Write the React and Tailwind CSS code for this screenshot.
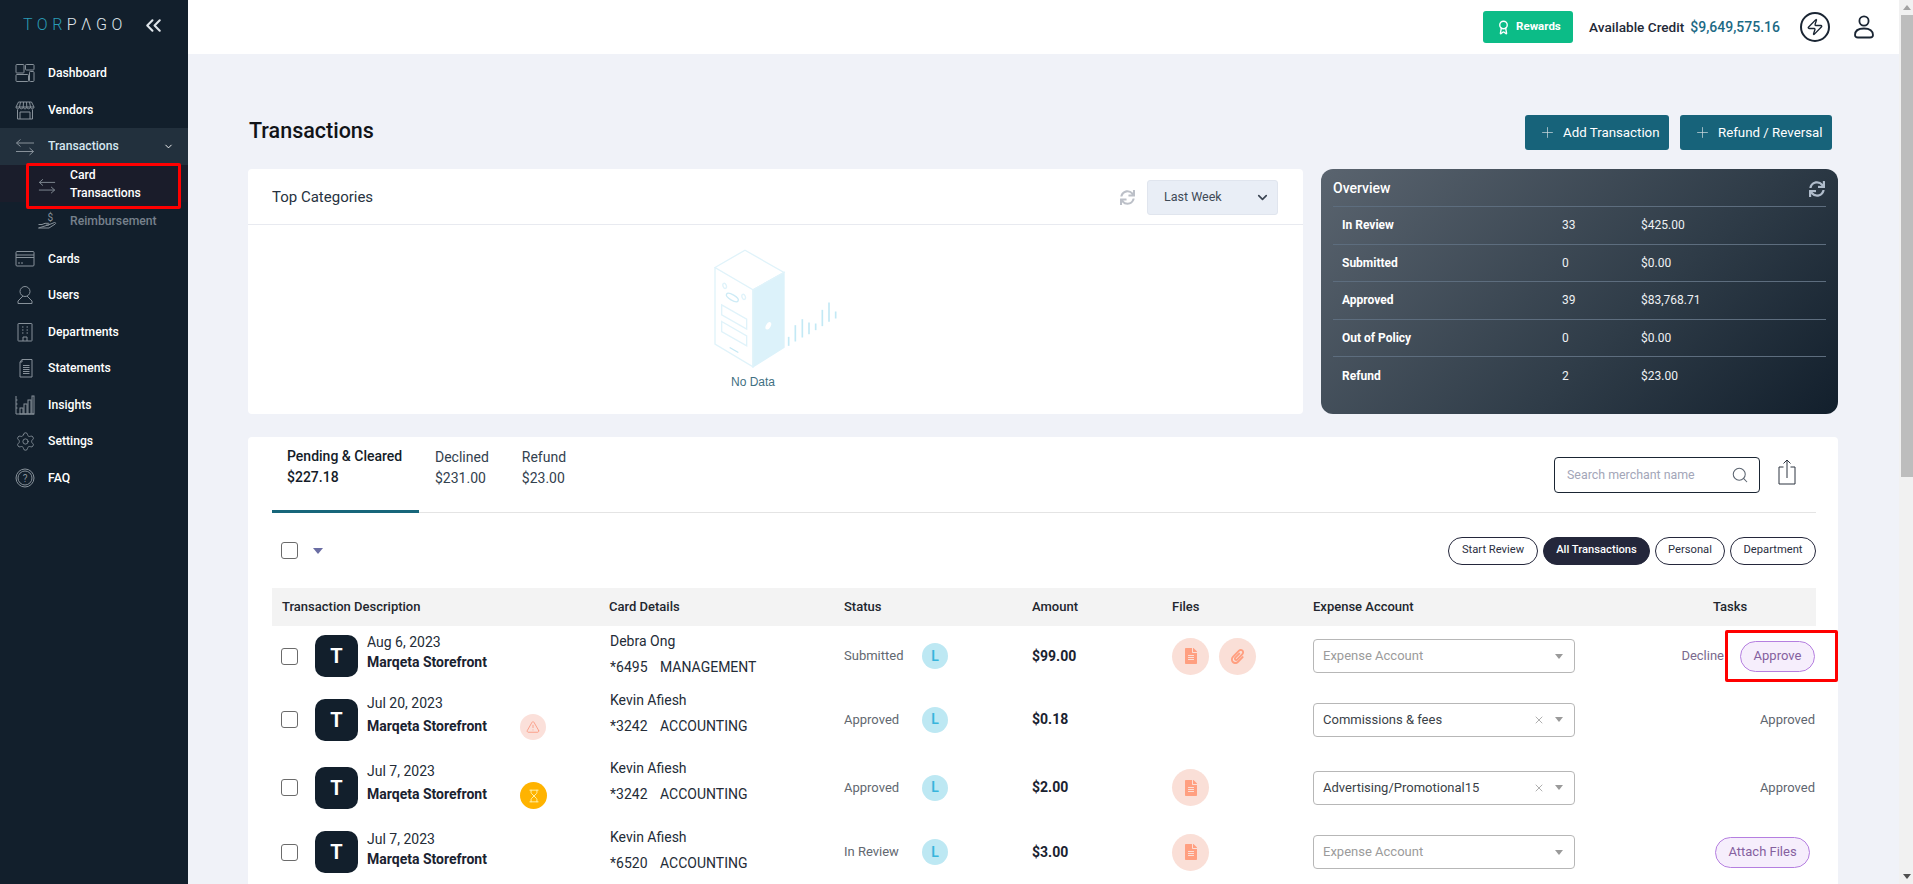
import React from "react";
import { Award, ChevronDown, ChevronsLeft, Plus, Search, Settings, TriangleAlert, Hourglass, Zap, X } from "lucide-react";
import { FaSync, FaFileAlt, FaPaperclip } from "react-icons/fa";

const S = ({ children, vb = "0 0 20 20", w = 20, h = 20 }) => (
  <svg width={w} height={h} viewBox={vb} fill="none" stroke="#87919a" strokeWidth="1">{children}</svg>
);

const IDash = () => (
  <S>
    <rect x="1" y="1.5" width="8" height="8.5" rx="0.8" /><rect x="10.5" y="1.5" width="8.5" height="5.5" rx="0.8" />
    <rect x="1" y="11.5" width="12.5" height="7" rx="0.8" /><rect x="14.5" y="8.5" width="4.5" height="10" rx="0.8" />
  </S>
);
const IVendor = () => (
  <S>
    <path d="M3.5 2h13l2.5 5H1z" /><path d="M1 7c0 2.4 3.6 2.4 3.6 0 0 2.4 3.6 2.4 3.6 0 0 2.4 3.6 2.4 3.6 0 0 2.4 3.6 2.4 3.6 0 0 2.4 3.6 2.4 3.6 0" />
    <path d="M5.5 2L4.5 7M8.5 2L8.2 7M11.5 2l.3 5M14.5 2l1 5" /><path d="M2.5 9.5V19h15V9.5M5 12h10v7M5 12v7" />
  </S>
);
const ITrans = ({ w = 20 }) => (
  <S w={w}>
    <path d="M19 6H1.5M5.5 2.5 1.5 6l4 3.5" /><path d="M1 14.5h17.5M14.5 11l4 3.5-4 3.5" />
  </S>
);
const IReimb = () => (
  <S>
    <path d="M1.5 13.5h3.5l3 -1.2h3.5c1 0 1 1.8 0 1.8H9M12 13.7l5.5 -2.2c1.2 -.3 1.6 1 .6 1.6L12 17H1.5z" />
    <text x="10.5" y="9.5" fontSize="10" fill="#87919a" stroke="none" fontFamily="Roboto">$</text>
  </S>
);
const ICard = () => (
  <S>
    <rect x="1" y="2.5" width="18" height="14.5" rx="1" /><path d="M1 6h18M1 8.5h18M3 14h2M6 14h2" />
  </S>
);
const IUser = () => (
  <S>
    <circle cx="10" cy="6.5" r="5" /><path d="M8 11 3 16v2.5h14V16l-5-5" />
  </S>
);
const IDept = () => (
  <S>
    <rect x="3" y="1.5" width="14" height="17.5" rx="0.5" /><path d="M7 5h1.5M11.5 5H13M7 8h1.5M11.5 8H13M7 11h1.5M11.5 11H13" /><path d="M8 19v-4h4v4" />
  </S>
);
const IState = () => (
  <S>
    <path d="M7 1.5h10V19H5V4z" /><path d="M7 1.5V4H5" /><path d="M8 7.5h6.5M8 9.5h6.5M8 11.5h6.5M8 13.5h6.5M8 15.5h6.5" />
  </S>
);
const IInsight = () => (
  <S>
    <path d="M1 1v18h18M1 5h1.5M1 9h1.5M1 13h1.5" /><rect x="5" y="13" width="3" height="6" /><rect x="9" y="9" width="3" height="10" /><rect x="13" y="5" width="3" height="14" /><rect x="17" y="1" width="2" height="18" />
  </S>
);
const IFaq = () => (
  <S>
    <circle cx="10" cy="10" r="9" /><circle cx="10" cy="10" r="7" />
    <text x="10" y="13.5" fontSize="10" textAnchor="middle" fill="#87919a" stroke="none" fontFamily="Roboto">?</text>
  </S>
);
const IGear = () => <Settings size={21} strokeWidth={1} color="#87919a" />;

const Item = ({ icon, label, h = "h-[36.7px]" }) => (
  <div className={`flex items-center ${h}`}>
    <div className="ml-[15px] w-[33px] flex items-center">{icon}</div>
    <span className="text-[12.2px] font-medium text-white">{label}</span>
  </div>
);

function Sidebar() {
  return (
    <aside className="w-[188px] shrink-0 bg-[#121f2c] h-full">
      <div className="h-[55px] flex items-start pt-[15px] pl-[23px]">
        <span className="text-[16px] font-light tracking-[0.28em] leading-[19px] w-[118px] whitespace-nowrap">
          <span className="text-[#2a9bb6]">TOR</span><span className="text-[#dfe5ea]">PΛGO</span>
        </span>
        <ChevronsLeft size={25} strokeWidth={2} color="#dfe5ea" className="-mt-[2px]" />
      </div>
      <Item icon={<IDash />} label="Dashboard" />
      <Item icon={<IVendor />} label="Vendors" />
      <div className="flex items-center h-[37px] bg-[#22303d]">
        <div className="ml-[15px] w-[33px] flex items-center"><ITrans /></div>
        <span className="text-[12.2px] font-medium text-[#d5e6ef] -mt-[1px]">Transactions</span>
        <ChevronDown size={11} color="#fff" className="ml-[44px]" />
      </div>
      <div className="relative h-[37px] bg-[#1a1d2b]">
        <div className="absolute left-[26px] top-[-2px] w-[155px] h-[46px] border-[3px] border-[#ff0000] rounded-[2px] bg-[#1a1c2a] flex items-center">
          <div className="ml-[9px] w-[32px] flex items-center"><ITrans w={18} /></div>
          <span className="text-[12.2px] font-medium text-white leading-[18px] w-[80px] -mt-[5px]">Card Transactions</span>
        </div>
      </div>
      <div className="flex items-center h-[38px]">
        <div className="ml-[37px] w-[33px] flex items-center"><IReimb /></div>
        <span className="text-[12.2px] font-medium text-[#77818c]">Reimbursement</span>
      </div>
      <Item h="h-[36.6px]" icon={<ICard />} label="Cards" />
      <Item h="h-[36.6px]" icon={<IUser />} label="Users" />
      <Item h="h-[36.6px]" icon={<IDept />} label="Departments" />
      <Item h="h-[36.6px]" icon={<IState />} label="Statements" />
      <Item h="h-[36.6px]" icon={<IInsight />} label="Insights" />
      <Item h="h-[36.6px]" icon={<IGear />} label="Settings" />
      <Item h="h-[36.6px]" icon={<IFaq />} label="FAQ" />
    </aside>
  );
}

function Header() {
  return (
    <header className="h-[54px] bg-white flex items-center shrink-0 pr-[25px] justify-end">
      <button className="w-[90px] h-[32px] rounded-[3px] bg-[#0cbc87] flex items-center pl-[13px] text-white text-[11.5px] font-bold">
        <Award size={15} strokeWidth={2.2} className="mr-[5px]" />Rewards
      </button>
      <span className="ml-[16px] text-[13.6px] font-medium text-[#1f2937]">Available Credit</span>
      <span className="ml-[6px] text-[14px] font-medium text-[#1c6a85]">$9,649,575.16</span>
      <div className="ml-[20px] w-[30px] h-[30px] rounded-full border-2 border-[#1a2533] flex items-center justify-center">
        <Zap size={18} strokeWidth={1.8} color="#1a2533" />
      </div>
      <svg className="ml-[24px]" width="20" height="24" viewBox="0 0 20 24" fill="none" stroke="#1a2533" strokeWidth="1.8">
        <circle cx="10" cy="6" r="4.6" />
        <path d="M1 20c0-4 3-6.5 9-6.5S19 16 19 20c0 1.5-1 2.5-3 2.5H4c-2 0-3-1-3-2.5z" />
      </svg>
    </header>
  );
}

const ActionBtn = ({ w, label }) => (
  <button className={`${w} h-[35px] rounded-[3px] bg-[#17637a] flex items-center pl-[14px] text-white text-[13.3px]`}>
    <Plus size={17} strokeWidth={1} color="#d0dbe0" className="mr-[7px]" />{label}
  </button>
);

function NoDataArt() {
  const bars = [[384, 288, 315], [404, 253, 302], [425, 235, 290], [445, 245, 280], [465, 248, 268], [485, 207, 256], [505, 185, 243], [525, 212, 233]];
  return (
    <svg width="124" height="119" viewBox="160 25 372 356" fill="none" stroke="#e0f3fa" strokeWidth="4">
      <path d="M277 147 370 95V320L277 378Z" fill="#dcf2fa" stroke="#dcf2fa" />
      <path d="M163 80 253 28 370 95 277 147ZM163 80V310L277 378V147" />
      <ellipse cx="215" cy="170" rx="20" ry="8" transform="rotate(30 215 170)" stroke="#cdebf6" />
      <ellipse cx="192" cy="135" rx="5" ry="8" transform="rotate(-20 192 135)" />
      <ellipse cx="249" cy="168" rx="5" ry="8" transform="rotate(-20 249 168)" />
      <path d="M183 192 258 235V265L183 222ZM183 242 258 285V315L183 272Z" />
      <path d="M207 320 233 335" stroke="#c5e8f4" />
      <ellipse cx="323" cy="255" rx="7" ry="12" transform="rotate(30 323 255)" fill="#fff" stroke="none" />
      {bars.map(([x, a, b]) => <path key={x} d={`M${x} ${a}V${b}`} stroke="#c3e9f5" strokeWidth="5" />)}
    </svg>
  );
}

const overview = [["In Review", "33", "$425.00"], ["Submitted", "0", "$0.00"], ["Approved", "39", "$83,768.71"], ["Out of Policy", "0", "$0.00"], ["Refund", "2", "$23.00"]];

function TopCards() {
  return (
    <div className="flex gap-[18px] mt-[19px]">
      <section className="w-[1055px] h-[245px] bg-white rounded-[4px]">
        <div className="h-[56px] pt-[2px] border-b border-[#e8eaf0] flex items-center pl-[24px] pr-[25px]">
          <span className="text-[15px] text-[#273240]">Top Categories</span>
          <FaSync size={15} color="#bcc0c8" className="ml-auto mr-[12px]" />
          <div className="w-[131px] h-[35px] rounded-[3px] bg-[#e9eef6] border border-[#e0e5ee] flex items-center pl-[16px] pr-[7px] text-[12.5px] text-[#3f4a57]">
            Last Week<ChevronDown size={15} strokeWidth={2.6} color="#3a4452" className="ml-auto" />
          </div>
        </div>
        <div className="flex flex-col items-center pt-[24px]">
          <NoDataArt />
          <span className="mr-[45px] mt-[6px] text-[12px] leading-[16px] text-[#3f7082] font-['Liberation_Sans',sans-serif]">No Data</span>
        </div>
      </section>
      <section className="w-[517px] h-[245px] rounded-[12px] bg-[linear-gradient(135deg,#5a646f,#2f3c48_60%,#121f2c)] px-[12px] text-white">
        <div className="h-[38px] pt-[2px] border-b border-[#5d6d7e] flex items-center justify-between">
          <span className="text-[14px] font-medium">Overview</span>
          <FaSync size={16} color="#b0bccb" className="mr-[1px]" />
        </div>
        {overview.map(([a, b, c], i) => (
          <div key={a} className={`flex items-center h-[37.5px] text-[12px] ${i < 4 ? "border-b border-[#5d6d7e]" : ""}`}>
            <span className="w-[229px] pl-[9px] font-bold">{a}</span>
            <span className="w-[79px] text-[#eef1f4]">{b}</span>
            <span className="text-[#eef1f4]">{c}</span>
          </div>
        ))}
      </section>
    </div>
  );
}

const Check = () => <div className="w-[17px] h-[17px] rounded-[3px] border border-[#6b6b6b] bg-white" />;

const Pill = ({ w, label, active }) => (
  <div className={`${w} h-[28px] rounded-full border border-[#24273b] flex items-center justify-center text-[11.2px] ${active ? "bg-[#24273b] text-white font-medium" : "text-[#2b2f3f]"}`}>{label}</div>
);

const FileCircle = ({ children }) => (
  <div className="w-[37px] h-[37px] rounded-full bg-[#fadfd7] flex items-center justify-center">{children}</div>
);
const FileIcon = () => <FileCircle><FaFileAlt size={16} color="#ff9f80" /></FileCircle>;

const Purple = ({ w, label }) => (
  <button className={`${w} h-[31px] rounded-full bg-[#f6eefc] border border-[#b57fe0] text-[#85609f] text-[13px]`}>{label}</button>
);

const Caret = () => <span className="w-0 h-0 border-x-[4px] border-x-transparent border-t-[5px] border-t-[#9a9a9a] ml-[10px]" />;

function ExpenseSelect({ value }) {
  return (
    <div className="w-[262px] h-[34px] rounded-[4px] border border-[#b7b7b7] flex items-center pl-[9px] pr-[11px] text-[13px]">
      <span className={value ? "text-[#3a3f47]" : "text-[#9b9b9b]"}>{value || "Expense Account"}</span>
      <span className="ml-auto flex items-center">
        {value && <X size={12} strokeWidth={1.4} color="#8c8c8c" />}
        <Caret />
      </span>
    </div>
  );
}

const rows = [
  { h: "h-[60px]", date: "Aug 6, 2023", dc: "mt-[7px] gap-[2px]", who: "Debra Ong", card: "*6495", dept: "MANAGEMENT", wc: "mt-[6px]", status: "Submitted", amt: "$99.00", files: 2, tasks: "approve" },
  { h: "h-[67px]", date: "Jul 20, 2023", dc: "mt-[8px] gap-[5px]", who: "Kevin Afiesh", card: "*3242", dept: "ACCOUNTING", wc: "mt-[5px]", status: "Approved", amt: "$0.18", files: 0, badge: "warn", value: "Commissions & fees", tasks: "approved" },
  { h: "h-[69px]", date: "Jul 7, 2023", dc: "mt-[9px] gap-[5px]", who: "Kevin Afiesh", card: "*3242", dept: "ACCOUNTING", wc: "mt-[6px]", status: "Approved", amt: "$2.00", files: 1, badge: "wait", value: "Advertising/Promotional15", tasks: "approved" },
  { h: "h-[60px]", date: "Jul 7, 2023", dc: "mt-[8px] gap-[2px]", who: "Kevin Afiesh", card: "*6520", dept: "ACCOUNTING", wc: "mt-[6px]", status: "In Review", amt: "$3.00", files: 1, tasks: "attach" },
];

const rowGrid = "grid grid-cols-[43px_52px_153px_90px_234px_188px_140px_141px_262px_240px]";

function Row({ r }) {
  return (
    <div className={`relative ${rowGrid} ${r.h} items-center`}>
      <div className="pl-[9px] flex"><Check /></div>
      <div className="w-[43px] h-[42px] rounded-[10px] bg-[#121f2c] flex items-center justify-center text-white text-[20px] font-bold">T</div>
      <div className={`self-start flex flex-col leading-[18px] ${r.dc}`}>
        <span className="text-[14px] text-[#242c37]">{r.date}</span>
        <span className="text-[14px] font-bold text-[#1a2230]">Marqeta Storefront</span>
      </div>
      <div className={`self-start ${r.badge === "warn" ? "mt-[28px]" : "mt-[29px]"}`}>
        {r.badge === "warn" && <div className="w-[26px] h-[26px] rounded-full bg-[#fbe0da] flex items-center justify-center"><TriangleAlert size={14} strokeWidth={1.3} color="#fb8c72" /></div>}
        {r.badge === "wait" && <div className="w-[27px] h-[27px] rounded-full bg-[#ffb300] flex items-center justify-center"><Hourglass size={14} strokeWidth={1.6} color="#fff3b0" /></div>}
      </div>
      <div className={`self-start flex flex-col gap-[8px] leading-[18px] text-[14px] text-[#242c37] ${r.wc}`}>
        <span>{r.who}</span>
        <span className="flex"><span className="w-[50px]">{r.card}</span><span>{r.dept}</span></span>
      </div>
      <div className="flex items-center">
        <span className="w-[78px] text-[13px] text-[#626870]">{r.status}</span>
        <div className="w-[26px] h-[26px] rounded-full bg-[#bde8f3] flex items-center justify-center text-[14px] font-semibold text-[#38b5dc]">L</div>
      </div>
      <span className="text-[14px] font-bold text-[#1a2230]">{r.amt}</span>
      <div className="flex gap-[10px]">
        {r.files > 0 && <FileIcon />}
        {r.files > 1 && <FileCircle><FaPaperclip size={15} color="#ff9f80" /></FileCircle>}
      </div>
      <ExpenseSelect value={r.value} />
      <div className="flex items-center justify-end text-[13px]">
        {r.tasks === "approve" && <>
          <span className="text-[#7a6a8e] mr-[16px]">Decline</span><Purple w="w-[75px]" label="Approve" />
        </>}
        {r.tasks === "approved" && <span className="text-[#5f6670]">Approved</span>}
        {r.tasks === "attach" && <div className="mr-[5px]"><Purple w="w-[95px]" label="Attach Files" /></div>}
      </div>
      {r.tasks === "approve" && <div className="absolute left-[1453px] top-[4px] w-[113px] h-[52px] border-[3px] border-[#ff0000] rounded-[2px]" />}
    </div>
  );
}

function ShareIcon() {
  return (
    <svg width="18" height="26" viewBox="0 0 18 26" fill="none" stroke="#2c3440" strokeWidth="1">
      <path d="M5.5 8H1v17h16V8h-4.5" /><path d="M9 19V1M5.5 4.5 9 1l3.5 3.5" />
    </svg>
  );
}

function TxCard() {
  return (
    <section className="mt-[23px] h-[470px] bg-white rounded-[4px] pl-[24px] pr-[22px]">
      <div className="h-[76px] border-b border-[#e4e4e4] flex items-start">
        <div className="w-[147px] h-[76px] border-b-[3px] border-[#17667a] pl-[15px] pt-[9px] text-[14px] font-medium leading-[21px] text-[#141c28]">
          <div>Pending &amp; Cleared</div><div>$227.18</div>
        </div>
        <div className="ml-[16px] pt-[10px] text-[14px] leading-[21px] text-[#33414e]">
          <div>Declined</div><div>$231.00</div>
        </div>
        <div className="ml-[33px] pt-[10px] text-[14px] leading-[21px] text-[#33414e]">
          <div>Refund</div><div>$23.00</div>
        </div>
        <div className="ml-auto mt-[20px] w-[206px] h-[36px] rounded-[4px] border border-[#1a2533] flex items-center pl-[12px] pr-[10px] text-[12.4px] text-[#a3a6b8]">
          Search merchant name<Search size={18} strokeWidth={1.4} color="#5b6470" className="ml-auto" />
        </div>
        <div className="ml-[18px] mr-[20px] mt-[22px]"><ShareIcon /></div>
      </div>
      <div className="h-[75px] flex items-center">
        <div className="pl-[9px] flex"><Check /></div>
        <span className="ml-[15px] w-0 h-0 border-x-[5px] border-x-transparent border-t-[6px] border-t-[#6a6da3]" />
        <div className="ml-auto flex gap-[5px]">
          <Pill w="w-[90px]" label="Start Review" />
          <Pill w="w-[107px]" label="All Transactions" active />
          <Pill w="w-[70px]" label="Personal" />
          <Pill w="w-[86px]" label="Department" />
        </div>
      </div>
      <div className="grid grid-cols-[337px_235px_188px_140px_141px_400px_102px] h-[38px] items-center bg-[#f3f3f3] text-[13px] font-medium text-[#22262e]">
        <span className="pl-[10px]">Transaction Description</span>
        <span>Card Details</span>
        <span>Status</span>
        <span>Amount</span>
        <span>Files</span>
        <span>Expense Account</span>
        <span>Tasks</span>
      </div>
      {rows.map((r, i) => <Row key={i} r={r} />)}
    </section>
  );
}

function ScrollBar() {
  return (
    <div className="w-[14px] shrink-0 h-full bg-[#f1f1f1] flex flex-col items-end">
      <div className="w-[12px] h-[15px] flex items-center justify-center">
        <span className="w-0 h-0 border-x-[4px] border-x-transparent border-b-[5px] border-b-[#a3a3a3]" />
      </div>
      <div className="w-[12px] h-[462px] bg-[#bdbdbd]" />
      <div className="w-[12px] mt-auto h-[15px] flex items-center justify-center">
        <span className="w-0 h-0 border-x-[4px] border-x-transparent border-t-[5px] border-t-[#505050]" />
      </div>
    </div>
  );
}

export default function App() {
  return (
    <div className="w-[1913px] h-[884px] flex overflow-hidden bg-[#f0f2f8] font-['Roboto',sans-serif]">
      <Sidebar />
      <div className="flex-1 min-w-0 flex flex-col">
        <Header />
        <main className="pl-[60px] pr-[61px]">
          <div className="mt-[61px] h-[35px] flex items-center pr-[6px]">
            <h1 className="text-[21.5px] font-medium text-[#111418] pl-[1px] -mt-[3px]">Transactions</h1>
            <div className="ml-auto flex gap-[11px]">
              <ActionBtn w="w-[144px]" label="Add Transaction" />
              <ActionBtn w="w-[152px]" label="Refund / Reversal" />
            </div>
          </div>
          <TopCards />
          <TxCard />
        </main>
      </div>
      <ScrollBar />
    </div>
  );
}
